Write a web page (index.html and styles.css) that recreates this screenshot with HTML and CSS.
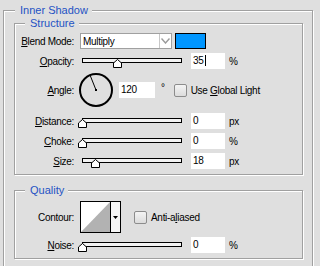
FILE: index.html
```html
<!DOCTYPE html>
<html lang="en">
<head>
    <meta charset="UTF-8">
    <title>Inner Shadow</title>
    <link rel="stylesheet" href="styles.css">
</head>
<body>
<div class="group outer">
    <span class="legend">Inner Shadow</span>

    <div class="group structure">
        <span class="legend">Structure</span>

        <div class="row">
            <label class="lbl"><u>B</u>lend Mode:</label>
            <div class="select">
                <span class="select-text">Multiply</span>
                <span class="select-arrow">
                    <svg width="9" height="6" viewBox="0 0 9 6"><path d="M0.5 0.5 L4.5 5 L8.5 0.5" fill="none" stroke="#9a9a9a" stroke-width="1.4"/></svg>
                </span>
            </div>
            <span class="swatch"></span>
        </div>

        <div class="row">
            <label class="lbl"><u>O</u>pacity:</label>
            <div class="slider">
                <span class="track"></span>
                <svg class="thumb" style="left:35px" width="9" height="9" viewBox="0 0 9 9"><polygon points="4.5,0.5 8.5,4 8.5,8.5 0.5,8.5 0.5,4" fill="#fff" stroke="#000"/></svg>
            </div>
            <span class="num">35<span class="caret"></span></span>
            <span class="unit">%</span>
        </div>

        <div class="row angle-row">
            <label class="lbl"><u>A</u>ngle:</label>
            <svg class="dial" width="36" height="34" viewBox="0 0 36 34">
                <circle cx="18" cy="17" r="16" fill="none" stroke="#000" stroke-width="2"/>
                <line x1="18" y1="17" x2="12" y2="2" stroke="#000" stroke-width="1"/>
                <rect x="17" y="16" width="2" height="2" fill="#000"/>
            </svg>
            <span class="num angle-num">120</span>
            <span class="deg">°</span>
            <span class="check"></span>
            <span class="check-text">Use <u>G</u>lobal Light</span>
        </div>

        <div class="row gap6">
            <label class="lbl"><u>D</u>istance:</label>
            <div class="slider">
                <span class="track"></span>
                <svg class="thumb" style="left:0px" width="9" height="9" viewBox="0 0 9 9"><polygon points="4.5,0.5 8.5,4 8.5,8.5 0.5,8.5 0.5,4" fill="#fff" stroke="#000"/></svg>
            </div>
            <span class="num">0</span>
            <span class="unit">px</span>
        </div>

        <div class="row">
            <label class="lbl"><u>C</u>hoke:</label>
            <div class="slider">
                <span class="track"></span>
                <svg class="thumb" style="left:0px" width="9" height="9" viewBox="0 0 9 9"><polygon points="4.5,0.5 8.5,4 8.5,8.5 0.5,8.5 0.5,4" fill="#fff" stroke="#000"/></svg>
            </div>
            <span class="num">0</span>
            <span class="unit">%</span>
        </div>

        <div class="row">
            <label class="lbl"><u>S</u>ize:</label>
            <div class="slider">
                <span class="track"></span>
                <svg class="thumb" style="left:13px" width="9" height="9" viewBox="0 0 9 9"><polygon points="4.5,0.5 8.5,4 8.5,8.5 0.5,8.5 0.5,4" fill="#fff" stroke="#000"/></svg>
            </div>
            <span class="num">18</span>
            <span class="unit">px</span>
        </div>
    </div>

    <div class="group quality">
        <span class="legend">Quality</span>

        <div class="row contour-row">
            <label class="lbl">Contour:</label>
            <div class="contour">
                <svg class="curve" width="29" height="30" viewBox="0 0 29 30"><polygon points="0,30 29,0 29,30" fill="#b2b2b2"/></svg>
                <span class="contour-btn">
                    <svg width="5" height="3" viewBox="0 0 5 3"><polygon points="0,0 5,0 2.5,3" fill="#000"/></svg>
                </span>
            </div>
            <span class="check aa-check"></span>
            <span class="check-text">Anti-a<u>l</u>iased</span>
        </div>

        <div class="row">
            <label class="lbl"><u>N</u>oise:</label>
            <div class="slider">
                <span class="track"></span>
                <svg class="thumb" style="left:0px" width="9" height="9" viewBox="0 0 9 9"><polygon points="4.5,0.5 8.5,4 8.5,8.5 0.5,8.5 0.5,4" fill="#fff" stroke="#000"/></svg>
            </div>
            <span class="num">0</span>
            <span class="unit">%</span>
        </div>
    </div>
</div>
</body>
</html>
```

FILE: styles.css
```css
body {
    margin: 0;
    background-color: #dfdfdf;
    font-family: "Liberation Sans", Arial, sans-serif;
    font-size: 10px;
    letter-spacing: -0.3px;
    color: #000;
    overflow: hidden;
}

u {
    text-decoration: underline;
    text-underline-offset: 1px;
}

/* etched group boxes */
.group {
    position: relative;
    border: 1px solid #a0a0a0;
    box-shadow: inset 1px 1px 0 #fff, 1px 1px 0 #fff;
}
.legend {
    position: absolute;
    top: -7px;
    left: 10px;
    padding: 0 4px 0 5px;
    background-color: #dfdfdf;
    color: #2453c4;
    font-size: 11px;
    line-height: 13px;
    letter-spacing: 0;
}
.outer {
    margin: 10px 0 0 3px;
    width: 298px;
    height: 300px;
    padding: 12px 0 0 10px;
}
.outer > .legend {
    left: 11px;
}
.structure {
    width: 287px;
    padding: 9px 0 5px 0;
}
.quality {
    width: 287px;
    margin-top: 15px;
    padding: 10px 0 5px 0;
}

/* rows */
.row {
    display: flex;
    align-items: center;
    height: 16px;
    margin-top: 4px;
}
.row:nth-of-type(1) {
    margin-top: 0;
}
.angle-row {
    height: 34px;
}
.gap6 {
    margin-top: 6px;
}
.contour-row {
    height: 32px;
    margin-top: 0;
}
.lbl {
    width: 59px;
    margin-right: 6px;
    text-align: right;
    white-space: nowrap;
}

/* blend mode */
.select {
    display: flex;
    align-items: center;
    width: 90px;
    height: 14px;
    border: 1px solid #a0a0a0;
    background-color: #fff;
}
.select-text {
    flex: 1;
    padding-left: 2px;
}
.select-arrow {
    display: flex;
    align-items: center;
    justify-content: center;
    width: 11px;
    height: 14px;
    border-left: 1px solid #c8c8c8;
}
.swatch {
    width: 29px;
    height: 14px;
    margin-left: 3px;
    border: 1px solid #000;
    background-color: #0096ff;
}

/* sliders */
.slider {
    position: relative;
    width: 100px;
    height: 16px;
    margin: 0 9px 0 2px;
}
.track {
    display: block;
    margin-top: 5px;
    height: 3px;
    border: 1px solid #000;
    background-color: #f2f2f2;
}
.thumb {
    position: absolute;
    top: 6px;
    margin-left: -4px;
}
.num {
    width: 32px;
    height: 16px;
    padding-left: 2px;
    line-height: 16px;
    background-color: #fff;
}
.caret {
    display: inline-block;
    width: 1px;
    height: 11px;
    margin-left: 1px;
    vertical-align: -2px;
    background-color: #000;
}
.unit {
    margin-left: 4px;
}

/* angle */
.dial {
    margin-left: -2px;
}
.angle-num {
    width: 34px;
    margin-left: 5px;
}
.deg {
    margin-left: 6px;
    align-self: flex-start;
    margin-top: 9px;
}
.check {
    width: 11px;
    height: 11px;
    margin-left: 9px;
    border: 1px solid #8c8c8c;
    border-radius: 2px;
    background: linear-gradient(#f4f4f4, #dcdcdc);
}
.check-text {
    margin-left: 4px;
}

/* contour */
.contour {
    display: flex;
    width: 39px;
    height: 30px;
    border: 1px solid #000;
    background-color: #fff;
}
.curve {
    border-right: 1px solid #000;
}
.contour-btn {
    display: flex;
    align-items: center;
    justify-content: center;
    flex: 1;
    background-color: #f6f6f6;
}
.aa-check {
    margin-left: 13px;
}
```
